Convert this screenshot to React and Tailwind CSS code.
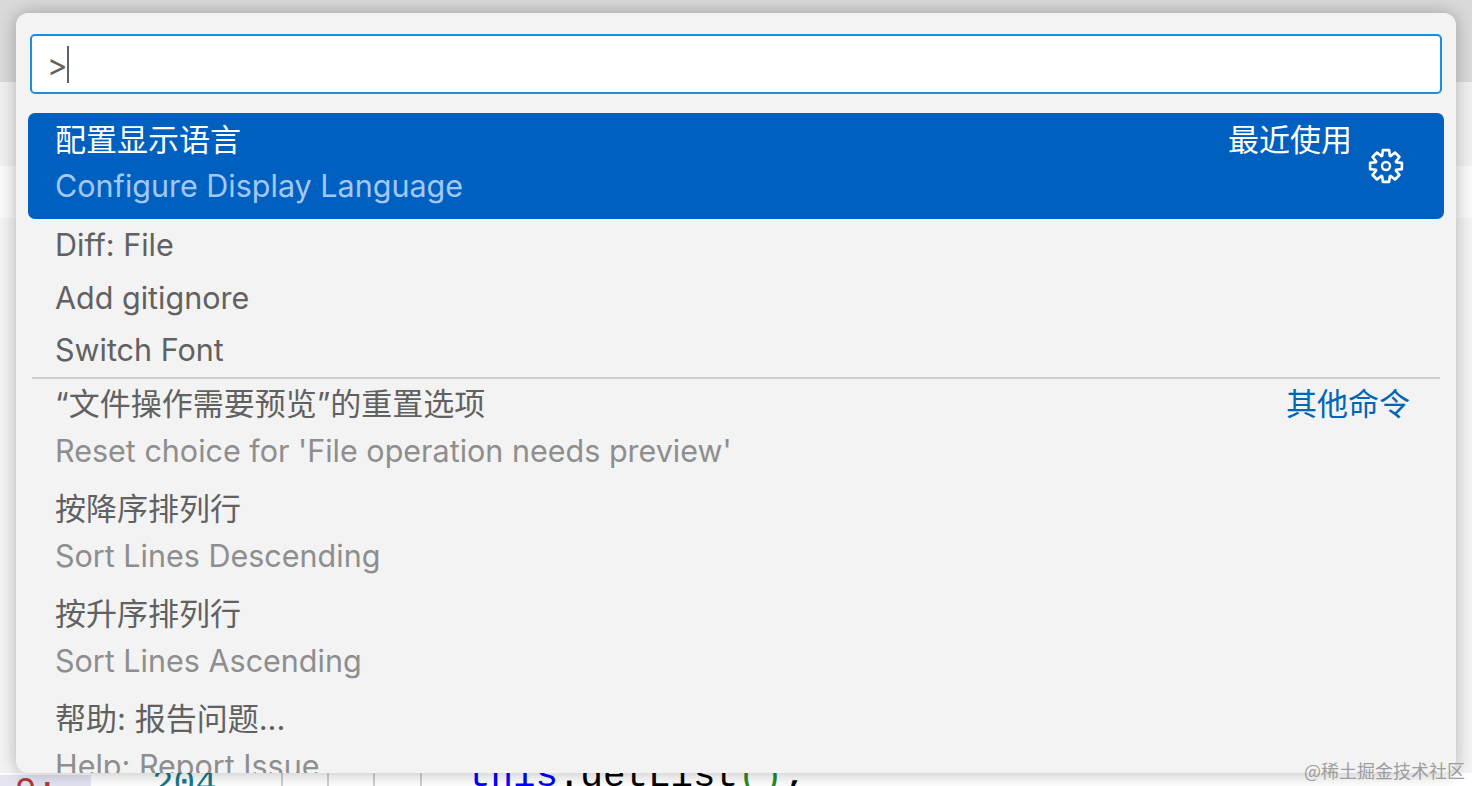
const FONT = "font-['Inter','Noto_Sans_CJK_SC',sans-serif]";

// 8 tooth gear outline, same shape as the palette's settings icon
function gearPath() {
  const pts = [];
  for (let i = 0; i < 8; i++) {
    const a = (i * Math.PI) / 4 - Math.PI / 2;
    const step = Math.PI / 8;
    [
      [10.8, -step * 0.92],
      [16.2, -step * 0.5],
      [16.2, step * 0.5],
      [10.8, step * 0.92],
    ].forEach(([r, d]) => {
      pts.push(`${(18 + r * Math.cos(a + d)).toFixed(2)} ${(18 + r * Math.sin(a + d)).toFixed(2)}`);
    });
  }
  return "M" + pts.join("L") + "Z";
}

function Gear() {
  return (
    <svg viewBox="0 0 36 36" className="w-[36px] h-[36px] mt-[35px] text-white" fill="none" stroke="currentColor">
      <path d={gearPath()} strokeWidth="2.6" strokeLinejoin="round" />
      <circle cx="18" cy="18" r="4" strokeWidth="2.4" />
    </svg>
  );
}

function Row({ title, sub, right }) {
  return (
    <div className="h-[105px] pl-[39px] pr-[46px] flex flex-col shrink-0">
      <div className="h-[51px] flex items-center justify-between shrink-0">
        <span className="text-[#616161] text-[31px] leading-none">{title}</span>
        {right && <span className="text-[#0066b8] text-[31px] leading-none">{right}</span>}
      </div>
      <div className="h-[45px] flex items-center shrink-0 text-[#8e8e8e] text-[30.5px] leading-none">
        {sub}
      </div>
    </div>
  );
}

function SingleRow({ title }) {
  return (
    <div className="h-[52.5px] pl-[39px] flex items-center shrink-0 text-[#616161] text-[30.5px] leading-none">
      {title}
    </div>
  );
}

export default function App() {
  return (
    <div className={`relative w-[1472px] h-[786px] overflow-hidden bg-white ${FONT}`}>
      {/* editor behind the palette */}
      <div className="h-[82px] bg-[#dadada]" />
      <div className="h-[84px] bg-[#f1f1f1]" />
      <div className="h-[52px] bg-[#fbfbfb]" />
      <div className="h-[555px] bg-[#f4f4f4]" />
      <div className="h-[13px] bg-white flex font-['Liberation_Mono',monospace] leading-none overflow-hidden">
        <div className="w-[91px] shrink-0 bg-[#e4e5f3] pl-[15px] text-[#b03a3a] text-[36px] leading-none mt-[2px]">9:</div>
        <div className="w-[190px] shrink-0 pl-[61px] text-[#1a7a8a] text-[36px] leading-none -mt-[6px]">204</div>
        <div className="w-[46px] shrink-0 border-l-2 border-[#cfcfcf]" />
        <div className="w-[46px] shrink-0 border-l-2 border-[#cfcfcf]" />
        <div className="w-[47px] shrink-0 border-l-2 border-[#cfcfcf]" />
        <div className="flex-1 border-l-2 border-[#cfcfcf] pl-[46px] whitespace-pre text-[37.5px] leading-none -mt-[15px]">
          <span className="text-[#0000ff]">this</span>
          <span className="text-black">.getList</span>
          <span className="text-[#2a8a2a]">()</span>
          <span className="text-black">;</span>
        </div>
      </div>

      {/* command palette */}
      <div className="absolute left-[16px] top-[13px] w-[1440px] h-[760px] bg-[#f3f3f3] rounded-[12px] overflow-hidden shadow-[0_0_18px_rgba(0,0,0,0.28)] flex flex-col">
        <div className="mt-[21px] mx-[14px] h-[60px] shrink-0 bg-white border-2 border-[#1a8fe0] rounded-[5px] flex items-center pl-[15px] text-[#616161] text-[31px]">
          <span className="leading-none">&gt;</span>
          <span className="w-[2px] h-[37px] bg-[#616161] -ml-[1px]" />
        </div>

        <div className="mt-[19px] mx-[12px] h-[106px] shrink-0 bg-[#0060c0] rounded-[7px] pl-[27px] pr-[40px] flex">
          <div className="flex-1 flex flex-col">
            <div className="h-[53px] flex items-center text-white text-[31px] leading-none">配置显示语言</div>
            <div className="h-[40px] flex items-center text-[#a3c8f5] text-[30.5px] leading-none">
              Configure Display Language
            </div>
          </div>
          <div className="flex items-start gap-[16px]">
            <div className="h-[53px] flex items-center text-white text-[31px] leading-none">最近使用</div>
            <Gear />
          </div>
        </div>

        <SingleRow title="Diff: File" />
        <SingleRow title="Add gitignore" />
        <SingleRow title="Switch Font" />
        <div className="mx-[16px] h-[2px] bg-[#cfcfcf] shrink-0 -mb-[1px]" />

        <Row
          title="“文件操作需要预览”的重置选项"
          sub="Reset choice for 'File operation needs preview'"
          right="其他命令"
        />
        <Row title="按降序排列行" sub="Sort Lines Descending" />
        <Row title="按升序排列行" sub="Sort Lines Ascending" />
        <Row title="帮助: 报告问题..." sub="Help: Report Issue" />
      </div>

      {/* watermark */}
      <div className="absolute right-[7px] bottom-[7px] text-[18px] leading-none text-[#8a8a8a] opacity-80 font-['Noto_Sans_CJK_SC',sans-serif]">
        @稀土掘金技术社区
      </div>
    </div>
  );
}
